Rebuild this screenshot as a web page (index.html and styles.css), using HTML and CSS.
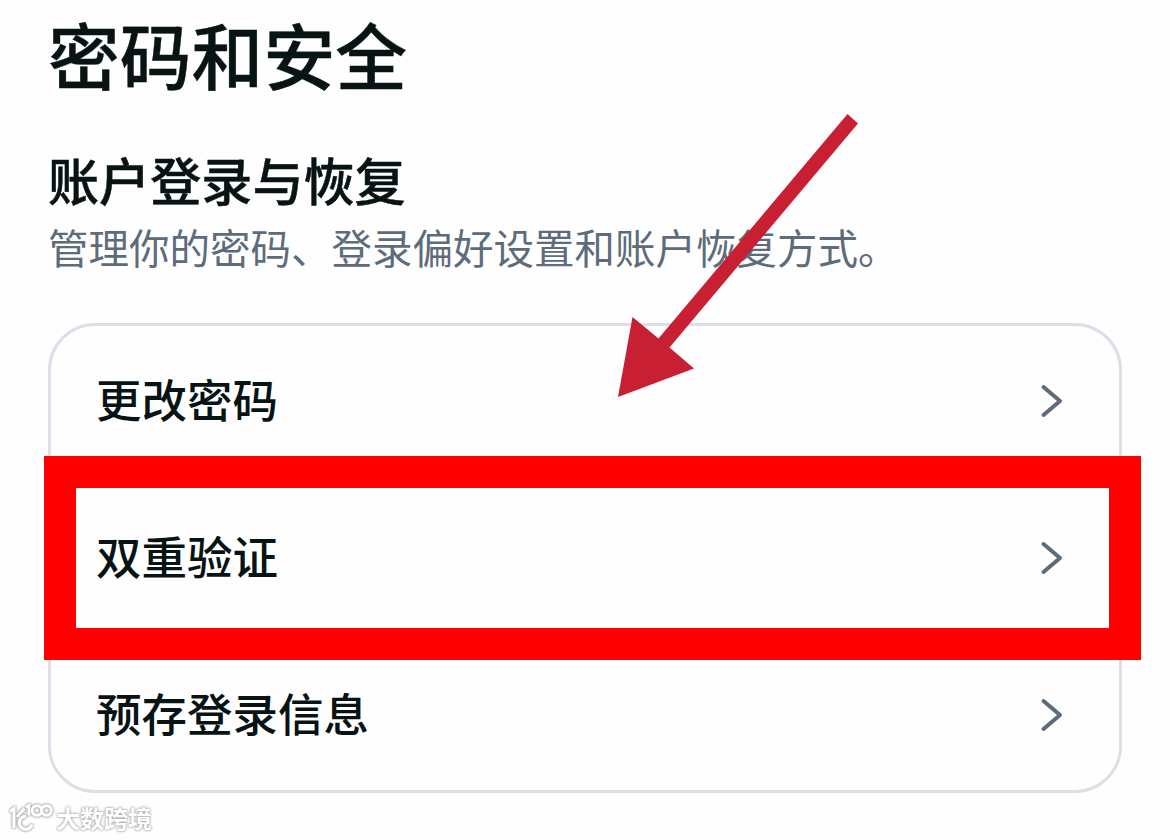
FILE: index.html
```html
<!DOCTYPE html>
<html lang="zh-CN">
<head>
    <meta charset="UTF-8">
    <meta name="viewport" content="width=device-width, initial-scale=1.0">
    <title>密码和安全</title>
    <link rel="stylesheet" href="styles.css">
</head>
<body>
    <main class="page">
        <h1>密码和安全</h1>
        <h2>账户登录与恢复</h2>
        <p class="description">管理你的密码、登录偏好设置和账户恢复方式。</p>

        <div class="card">
            <a class="row">
                <span class="label">更改密码</span>
                <svg class="chevron" viewBox="0 0 24 36"><path d="M3.5 4 L20 18 L3.5 32"/></svg>
            </a>
            <a class="row highlighted">
                <span class="label">双重验证</span>
                <svg class="chevron" viewBox="0 0 24 36"><path d="M3.5 4 L20 18 L3.5 32"/></svg>
            </a>
            <a class="row">
                <span class="label">预存登录信息</span>
                <svg class="chevron" viewBox="0 0 24 36"><path d="M3.5 4 L20 18 L3.5 32"/></svg>
            </a>
        </div>
    </main>

    <!-- Arrow pointing at the settings list -->
    <svg class="arrow" viewBox="0 0 240 284">
        <path d="M229.5 0 L240 9.5 L51.5 233.5 L76 254.5 L0 283 L14.5 203 L40.5 224.5 Z"/>
    </svg>

    <div class="watermark">
        <svg class="watermark-logo" viewBox="0 0 44 32">
            <path d="M1 9.5 L5 6.5 V26"/>
            <path d="M15.5 6.5 L8 15 M17 14.5 H15 A6.5 6.5 0 1 0 23 22.5"/>
            <path d="M17 5.5 L20 3.5 V13.5"/>
            <circle cx="28" cy="8.5" r="4.8"/>
            <circle cx="37.5" cy="8.5" r="4.8"/>
        </svg>
        <span>大数跨境</span>
    </div>
</body>
</html>
```

FILE: styles.css
```css
body {
    font-family: "Noto Sans CJK SC", sans-serif;
    background-color: #fefefe;
    margin: 0;
    color: #081414;
    height: 840px;
    overflow: hidden;
    position: relative;
}

.page {
    padding: 3px 48px 0;
}

h1 {
    margin: 0;
    font-size: 71.8px;
    font-weight: 500;
    line-height: 100px;
    -webkit-text-stroke: 0.4px #081414;
}

h2 {
    margin: 46px 0 0;
    font-size: 51.1px;
    font-weight: 500;
    line-height: 60px;
    -webkit-text-stroke: 0.5px #081414;
}

.description {
    margin: 9px 0 0;
    font-size: 40.5px;
    line-height: 58px;
    color: #5d6c7b;
}

/* Settings list */
.card {
    display: flex;
    flex-direction: column;
    gap: 7px;
    margin-top: 47px;
    border: 3px solid #dcdfe7;
    border-radius: 47px;
}

.row {
    position: relative;
    display: flex;
    align-items: center;
    justify-content: space-between;
    height: 150px;
    padding: 0 55px 0 45px;
    font-size: 45.5px;
    font-weight: 500;
    line-height: 60px;
}

.label {
    padding-bottom: 6px;
}

.chevron {
    width: 24px;
    height: 36px;
    fill: none;
    stroke: #5d6c7b;
    stroke-width: 4;
    stroke-linecap: round;
    stroke-linejoin: round;
}

/* Red frame around the row, wider than the card */
.highlighted::before {
    content: "";
    position: absolute;
    top: -27px;
    bottom: -27px;
    left: -7px;
    right: -22px;
    border: 32px solid #ff0000;
}

.arrow {
    position: absolute;
    left: 618px;
    top: 114px;
    width: 240px;
    height: 284px;
    fill: #c81f32;
}

.watermark {
    position: absolute;
    left: 9px;
    top: 800px;
    display: flex;
    align-items: center;
    gap: 3px;
    color: #ffffff;
    font-size: 24px;
    font-weight: 700;
    line-height: 36px;
    text-shadow: 0 0 2px #999999, 0 0 3px #aaaaaa;
}

.watermark-logo {
    width: 44px;
    height: 32px;
    fill: none;
    stroke: #ffffff;
    stroke-width: 3;
    overflow: visible;
    filter: drop-shadow(0 0 1px #999999) drop-shadow(0 0 1px #bbbbbb);
}
```
